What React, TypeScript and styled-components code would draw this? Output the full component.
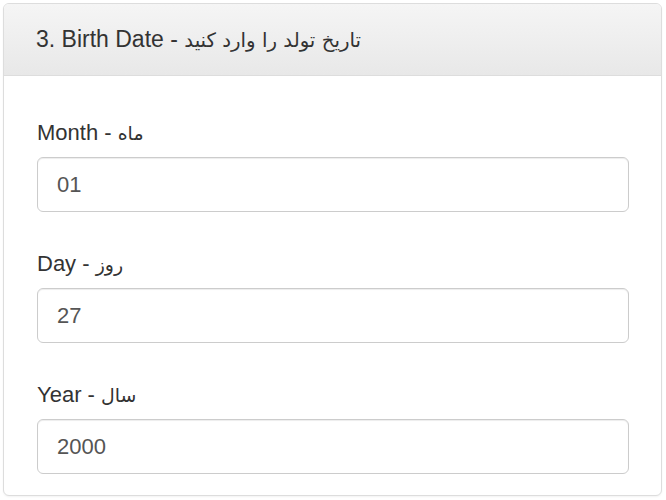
import styled, { createGlobalStyle } from "styled-components";

const GlobalStyle = createGlobalStyle`
  * {
    box-sizing: border-box;
  }
  body {
    margin: 0;
    background: #ffffff;
    font-family: "Liberation Sans", "DejaVu Sans", Arial, sans-serif;
    color: #333333;
  }
`;

const fields = [
  { en: "Month", fa: "ماه", value: "01" },
  { en: "Day", fa: "روز", value: "27" },
  { en: "Year", fa: "سال", value: "2000" },
];

const App = () => {
  return (
    <>
      <GlobalStyle />
      <Page>
        <Panel>
          <Heading>
            <Title>
              3. Birth Date - <Farsi>تاریخ تولد را وارد کنید</Farsi>
            </Title>
          </Heading>
          <Body>
            {fields.map((field) => (
              <Group key={field.en}>
                <Label>
                  {field.en} - <Farsi>{field.fa}</Farsi>
                </Label>
                <Input type="text" defaultValue={field.value} readOnly />
              </Group>
            ))}
          </Body>
        </Panel>
      </Page>
    </>
  );
};

export default App;

const Page = styled.div`
  padding: 3px;
`;
const Panel = styled.section`
  width: 659px;
  border: 1px solid #dddddd;
  border-radius: 6px;
  background: #ffffff;
  box-shadow: 0 1px 2px rgba(0, 0, 0, 0.05);
  overflow: hidden;
`;
const Heading = styled.header`
  display: flex;
  align-items: center;
  height: 72px;
  padding: 0 32px;

  background-image: linear-gradient(to bottom, #f5f5f5 0%, #e8e8e8 100%);
  border-bottom: 1px solid #dddddd;
`;
const Title = styled.h3`
  margin: 0;
  font-size: 23px;
  font-weight: 400;
  color: #333333;
`;
const Farsi = styled.span`
  font-family: "DejaVu Sans", sans-serif;
  font-size: 0.86em;
`;
const Body = styled.div`
  display: flex;
  flex-direction: column;
  gap: 36px;
  padding: 41px 32px 21px 33px;
`;
const Group = styled.div`
  display: flex;
  flex-direction: column;
  gap: 8px;
`;
const Label = styled.label`
  font-size: 22px;
  line-height: 32px;
  font-weight: 400;
  color: #333333;
`;
const Input = styled.input`
  height: 55px;
  width: 100%;
  padding: 0 19px;

  font-family: "Liberation Sans", Arial, sans-serif;
  font-size: 22px;
  color: #555555;

  background: #ffffff;
  border: 1px solid #cccccc;
  border-radius: 6px;
  box-shadow: inset 0 1px 1px rgba(0, 0, 0, 0.075);
  outline: none;
`;
